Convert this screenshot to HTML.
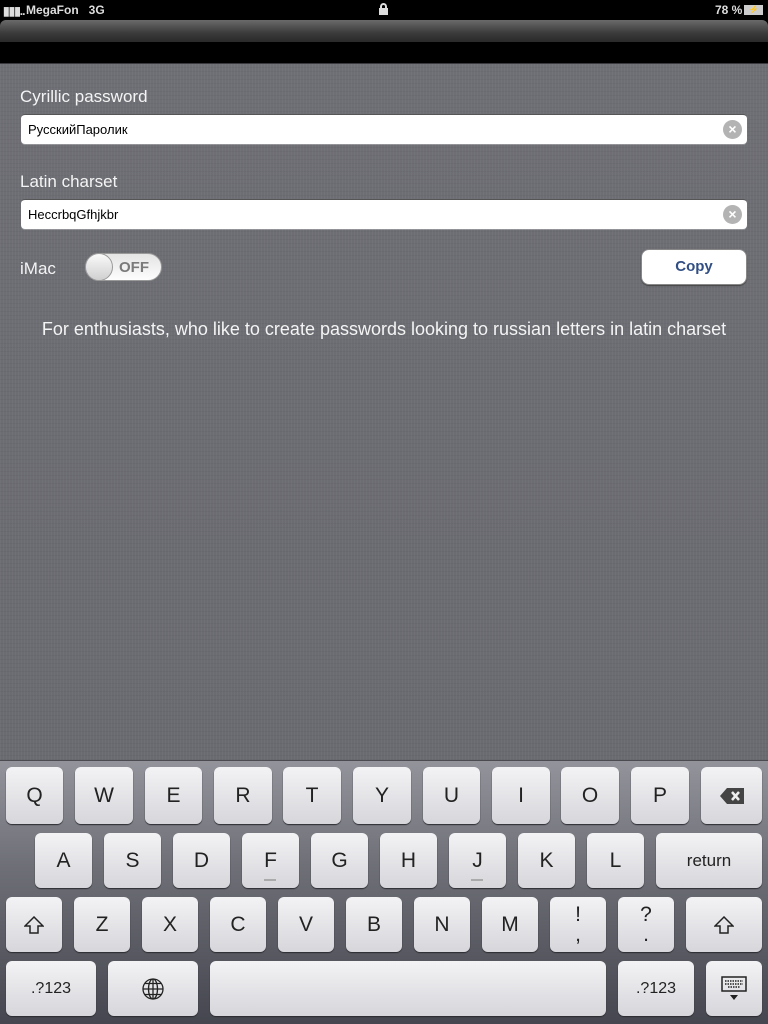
<!DOCTYPE html>
<html><head><meta charset="utf-8"><style>
*{margin:0;padding:0;box-sizing:border-box}
body{width:768px;height:1024px;overflow:hidden;background:#000;font-family:"Liberation Sans",sans-serif;position:relative}
.abs{position:absolute}
#sb{left:0;top:0;width:768px;height:20px;background:#000;color:#ddd;font-size:12px;font-weight:bold}
#nav{left:0;top:20px;width:768px;height:22px;background:linear-gradient(#6a6a6a,#3a3a3a 60%,#2a2a2a);border-radius:6px 6px 0 0}
#main{left:0;top:63px;width:768px;height:697px;background:#6c6d73;
background-image:repeating-linear-gradient(90deg,rgba(255,255,255,.03) 0 1px,transparent 1px 3px),repeating-linear-gradient(0deg,rgba(0,0,0,.04) 0 1px,transparent 1px 4px),linear-gradient(#6e6f75,#6a6b71);border-top:1px solid #3a3a3e}
.lbl{color:#f4f4f4;font-size:17px}
.tf{left:21px;width:726px;height:30px;background:#fff;border-radius:4px;border-top:1px solid #555;font-size:13px;color:#000;padding:7px 0 0 7px;box-shadow:0 1px 0 rgba(255,255,255,.25)}
.clr{position:absolute;right:5px;top:5px;width:19px;height:19px;border-radius:50%;background:#b3b3b3;color:#fff;font-size:14px;font-weight:bold;text-align:center;line-height:19px}
#kb{left:0;top:760px;width:768px;height:264px;background:linear-gradient(#93949b,#6e6f77 40%,#45464f);border-top:1px solid #4a4a50}
.k{position:absolute;background:linear-gradient(#f3f3f5,#d6d6db);border-radius:6px;box-shadow:0 1px 1px #2a2a30;color:#222;font-size:21px;text-align:center;display:flex;align-items:center;justify-content:center}
</style></head><body>
<div id="sb" class="abs">
<div class="abs" style="left:3px;top:4px;font-size:12px;letter-spacing:-1px">▮▮▮..</div>
<div class="abs" style="left:26px;top:3px">MegaFon&nbsp;&nbsp;&nbsp;3G</div>
<div class="abs" style="left:379px;top:3px;width:9px;height:12px"><div style="position:absolute;left:1px;top:0;width:7px;height:7px;border:2px solid #ddd;border-bottom:none;border-radius:4px 4px 0 0"></div><div style="position:absolute;left:0;top:5px;width:9px;height:7px;background:#ddd"></div></div>
<div class="abs" style="left:715px;top:3px">78 %</div>
<div class="abs" style="left:744px;top:5px;width:19px;height:10px;border:1px solid #ccc;background:#ccc;font-size:8px;color:#000;text-align:center;line-height:8px">⚡</div>
</div>
<div id="nav" class="abs"></div>
<div class="abs" style="left:0;top:42px;width:768px;height:21px;background:#000"></div>
<div id="main" class="abs">
<div class="abs lbl" style="left:20px;top:23px">Cyrillic password</div>
<div class="abs tf" style="top:50px">РусскийПаролик<div class="clr">×</div></div>
<div class="abs lbl" style="left:20px;top:108px">Latin charset</div>
<div class="abs tf" style="top:135px">HeccrbqGfhjkbr<div class="clr">×</div></div>
<div class="abs lbl" style="left:20px;top:195px">iMac</div>
<div class="abs" style="left:85px;top:189px;width:77px;height:28px;border-radius:14px;background:linear-gradient(#e4e4e4,#fdfdfd);border:1px solid #999;color:#7a7a7a;font-weight:bold;font-size:15px;padding:5px 0 0 33px">OFF</div>
<div class="abs" style="left:85px;top:189px;width:28px;height:28px;border-radius:50%;background:linear-gradient(#fafafa,#d0d0d0);border:1px solid #999"></div>
<div class="abs" style="left:641px;top:185px;width:106px;height:36px;border-radius:8px;background:#fff;border:1px solid #888;box-shadow:0 1px 1px #444;color:#324f85;font-weight:bold;font-size:15px;text-align:center;line-height:34px">Copy</div>
<div class="abs" style="left:0;top:255px;width:768px;text-align:center;color:#f4f4f4;font-size:18px">For enthusiasts, who like to create passwords looking to russian letters in latin charset</div>
</div>
<div id="kb" class="abs"></div>
<div class="k" style="left:6px;top:767px;width:57px;height:57px">Q</div>
<div class="k" style="left:75px;top:767px;width:58px;height:57px">W</div>
<div class="k" style="left:145px;top:767px;width:57px;height:57px">E</div>
<div class="k" style="left:214px;top:767px;width:58px;height:57px">R</div>
<div class="k" style="left:283px;top:767px;width:58px;height:57px">T</div>
<div class="k" style="left:353px;top:767px;width:58px;height:57px">Y</div>
<div class="k" style="left:423px;top:767px;width:57px;height:57px">U</div>
<div class="k" style="left:492px;top:767px;width:58px;height:57px">I</div>
<div class="k" style="left:561px;top:767px;width:58px;height:57px">O</div>
<div class="k" style="left:631px;top:767px;width:58px;height:57px">P</div>
<div class="k" style="left:701px;top:767px;width:61px;height:57px"><svg width="24" height="16" viewBox="0 0 24 16"><path d="M7 0H24V16H7L0 8Z" fill="#444"/><path d="M12 4l7 8M19 4l-7 8" stroke="#eee" stroke-width="2.5"/></svg></div>
<div class="k" style="left:35px;top:833px;width:57px;height:55px">A</div>
<div class="k" style="left:104px;top:833px;width:57px;height:55px">S</div>
<div class="k" style="left:173px;top:833px;width:57px;height:55px">D</div>
<div class="k" style="left:242px;top:833px;width:57px;height:55px">F<div style="position:absolute;left:22px;bottom:7px;width:12px;height:2px;background:#aaa"></div></div>
<div class="k" style="left:311px;top:833px;width:57px;height:55px">G</div>
<div class="k" style="left:380px;top:833px;width:57px;height:55px">H</div>
<div class="k" style="left:449px;top:833px;width:57px;height:55px">J<div style="position:absolute;left:22px;bottom:7px;width:12px;height:2px;background:#aaa"></div></div>
<div class="k" style="left:518px;top:833px;width:57px;height:55px">K</div>
<div class="k" style="left:587px;top:833px;width:57px;height:55px">L</div>
<div class="k" style="left:656px;top:833px;width:106px;height:55px;font-size:17px">return</div>
<div class="k" style="left:6px;top:897px;width:56px;height:55px"><svg width="20" height="18" viewBox="0 0 20 18"><path d="M10 1L1 10H6V17H14V10H19Z" fill="none" stroke="#222" stroke-width="1.5"/></svg></div>
<div class="k" style="left:74px;top:897px;width:56px;height:55px">Z</div>
<div class="k" style="left:142px;top:897px;width:56px;height:55px">X</div>
<div class="k" style="left:210px;top:897px;width:56px;height:55px">C</div>
<div class="k" style="left:278px;top:897px;width:56px;height:55px">V</div>
<div class="k" style="left:346px;top:897px;width:56px;height:55px">B</div>
<div class="k" style="left:414px;top:897px;width:56px;height:55px">N</div>
<div class="k" style="left:482px;top:897px;width:56px;height:55px">M</div>
<div class="k" style="left:550px;top:897px;width:56px;height:55px;flex-direction:column;line-height:20px">!<br>,</div>
<div class="k" style="left:618px;top:897px;width:56px;height:55px;flex-direction:column;line-height:20px">?<br>.</div>
<div class="k" style="left:686px;top:897px;width:76px;height:55px"><svg width="20" height="18" viewBox="0 0 20 18"><path d="M10 1L1 10H6V17H14V10H19Z" fill="none" stroke="#222" stroke-width="1.5"/></svg></div>
<div class="k" style="left:6px;top:961px;width:90px;height:55px;font-size:16px">.?123</div>
<div class="k" style="left:108px;top:961px;width:90px;height:55px"><svg width="22" height="22" viewBox="0 0 22 22" fill="none" stroke="#222" stroke-width="1.3"><circle cx="11" cy="11" r="10"/><ellipse cx="11" cy="11" rx="4.5" ry="10"/><path d="M11 1V21M1 11H21M3 5.5H19M3 16.5H19"/></svg></div>
<div class="k" style="left:210px;top:961px;width:396px;height:55px"></div>
<div class="k" style="left:618px;top:961px;width:76px;height:55px;font-size:16px">.?123</div>
<div class="k" style="left:706px;top:961px;width:56px;height:55px;flex-direction:column"><svg width="26" height="26" viewBox="0 0 26 26"><rect x="1" y="1" width="24" height="14" fill="none" stroke="#222" stroke-width="1.5"/><path d="M4 5h18M4 8h18M7 11h12" stroke="#222" stroke-width="1.5" stroke-dasharray="1.5 1"/><path d="M9 19h8l-4 5z" fill="#222"/></svg></div>
</body></html>
